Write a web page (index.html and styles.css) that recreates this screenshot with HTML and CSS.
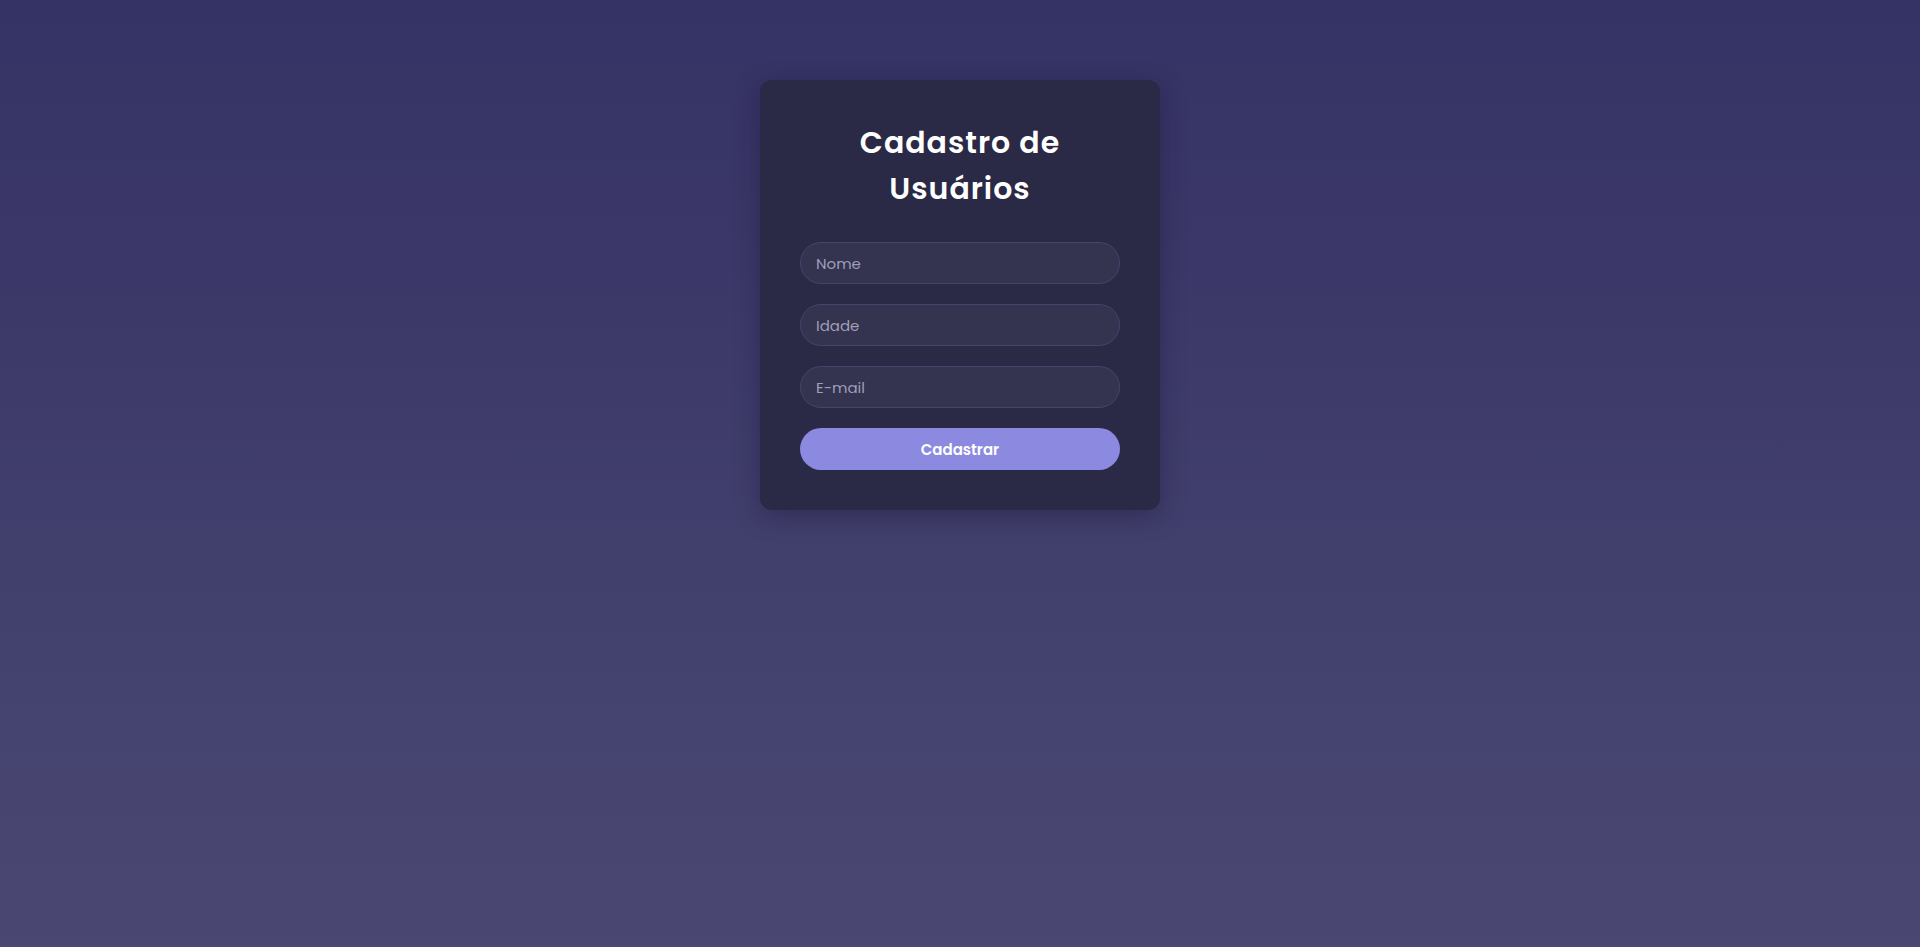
FILE: index.html
```html
<!DOCTYPE html>
<html lang="pt-BR">
<head>
<meta charset="UTF-8">
<title>Cadastro de Usuários</title>
<link rel="stylesheet" href="styles.css">
</head>
<body>
  <main class="card">
    <h1 class="title">Cadastro de Usuários</h1>
    <form class="form">
      <input class="field" type="text" placeholder="Nome">
      <input class="field" type="number" placeholder="Idade">
      <input class="field" type="email" placeholder="E-mail">
      <button class="submit" type="button">Cadastrar</button>
    </form>
  </main>
</body>
</html>
```
FILE: styles.css
```css
* { box-sizing: border-box; }
html, body { height: 100%; }
body {
  margin: 0;
  min-height: 100vh;
  background: linear-gradient(180deg, #353265 0%, #4a4872 100%);
  font-family: "Poppins", "Inter", "Open Sans", sans-serif;
  display: flex;
  justify-content: center;
  align-items: flex-start;
  padding-top: 80px;
}
.card {
  width: 400px;
  background: #2a2946;
  border-radius: 12px;
  padding: 40px;
  box-shadow: 0 6px 24px rgba(20, 18, 45, 0.35);
}
.title {
  margin: 0 0 30px;
  color: #ffffff;
  font-size: 30px;
  font-weight: 600;
  letter-spacing: 1px;
  line-height: 46px;
  text-align: center;
  padding: 0 20px;
}
.form {
  display: flex;
  flex-direction: column;
  gap: 20px;
}
.field {
  height: 42px;
  width: 100%;
  border: 1px solid #46446c;
  background: #343350;
  border-radius: 21px;
  padding: 0 15px;
  font-family: inherit;
  font-size: 15px;
  color: #e6e6f0;
  outline: none;
}
.field::placeholder { color: #a09eb6; }
.field::-webkit-outer-spin-button,
.field::-webkit-inner-spin-button { -webkit-appearance: none; margin: 0; }
.submit {
  height: 42px;
  width: 100%;
  border: none;
  border-radius: 21px;
  background: #8b8ae0;
  color: #ffffff;
  font-family: inherit;
  font-size: 15px;
  font-weight: 600;
  cursor: pointer;
}
```
